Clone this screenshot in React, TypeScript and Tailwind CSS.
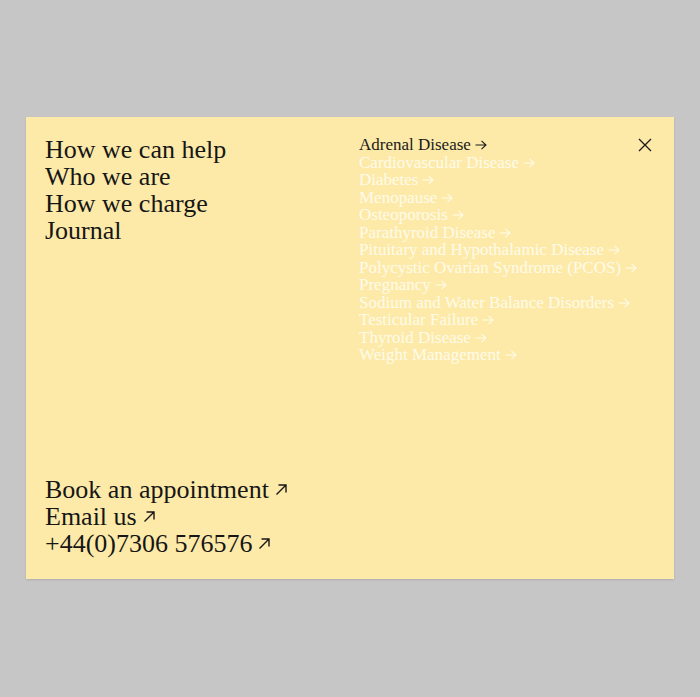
import React from 'react';

const topLinks = ['How we can help', 'Who we are', 'How we charge', 'Journal'];

const conditions = [
  'Adrenal Disease',
  'Cardiovascular Disease',
  'Diabetes',
  'Menopause',
  'Osteoporosis',
  'Parathyroid Disease',
  'Pituitary and Hypothalamic Disease',
  'Polycystic Ovarian Syndrome (PCOS)',
  'Pregnancy',
  'Sodium and Water Balance Disorders',
  'Testicular Failure',
  'Thyroid Disease',
  'Weight Management',
];

const contacts = ['Book an appointment', 'Email us', '+44(0)7306 576576'];

const ArrowRight = () => (
  <svg width="12" height="10" viewBox="0 0 12 10" fill="none" stroke="currentColor" strokeWidth="1.1" className="inline-block ml-[4px] -mt-[2px]">
    <path d="M0.5 5h10.5M6.5 0.8L11 5l-4.5 4.2" />
  </svg>
);

const ArrowUpRight = () => (
  <svg width="13" height="13" viewBox="0 0 13 13" fill="none" stroke="currentColor" strokeWidth="1.4" className="inline-block ml-[6px] -mt-[5px]">
    <path d="M1.5 11.5L11 2M3.5 2H11v7.5" />
  </svg>
);

const App: React.FC = () => {
  return (
    <div className="w-[700px] h-[697px] bg-[#c6c6c6] pt-[117px] px-[26px]" style={{ fontFamily: '"Liberation Serif", serif' }}>
      <div className="relative w-[648px] h-[462px] bg-[#fdeaa8] flex pl-[19px] pt-[19px] pb-[22px] shadow-[0_1px_2px_rgba(0,0,0,0.12)]">
        <div className="w-[314px] flex flex-col justify-between text-[#161616] text-[26px] leading-[27px]">
          <nav className="flex flex-col">
            {topLinks.map((l) => (
              <a key={l} className="block">{l}</a>
            ))}
          </nav>
          <div className="flex flex-col">
            {contacts.map((c) => (
              <a key={c} className="block whitespace-nowrap">
                {c}
                <ArrowUpRight />
              </a>
            ))}
          </div>
        </div>
        <ul className="flex flex-col text-[17px] leading-[17.5px]">
          {conditions.map((c, i) => (
            <li key={c} className={i === 0 ? 'text-[#1a1a1a]' : 'text-[#fffbea]'}>
              {c}
              <ArrowRight />
            </li>
          ))}
        </ul>
        <button className="absolute right-[22px] top-[21px] text-[#1a1a1a]">
          <svg width="14" height="14" viewBox="0 0 14 14" stroke="currentColor" strokeWidth="1.3">
            <path d="M1 1l12 12M13 1L1 13" />
          </svg>
        </button>
      </div>
    </div>
  );
};

export default App;
